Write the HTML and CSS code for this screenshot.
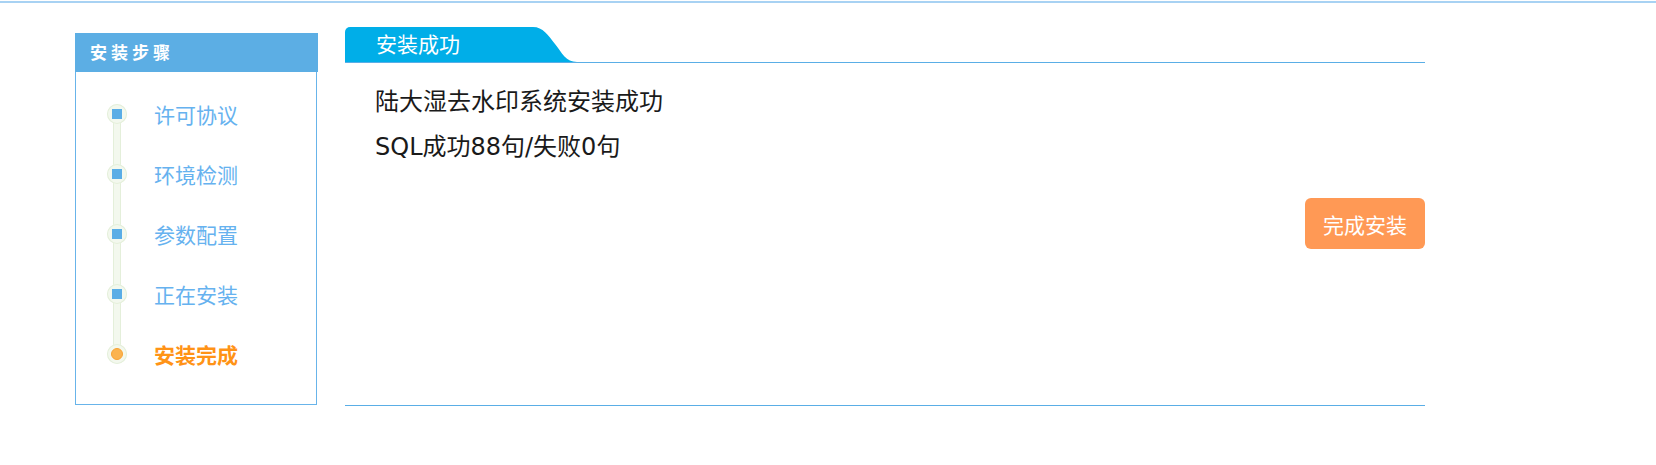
FILE: index.html
```html
<!DOCTYPE html>
<html lang="zh-CN">
<head>
<meta charset="UTF-8">
<meta name="viewport" content="width=device-width, initial-scale=1.0">
<title>安装成功</title>
<link rel="stylesheet" href="styles.css">
</head>
<body>

<div class="topline"></div>

<div class="wrap">
    <div class="side">
        <div class="side-title">安装步骤</div>
        <div class="side-body">
            <ul class="steps">
                <li class="done"><span class="dot"><i></i></span>许可协议</li>
                <li class="done"><span class="dot"><i></i></span>环境检测</li>
                <li class="done"><span class="dot"><i></i></span>参数配置</li>
                <li class="done"><span class="dot"><i></i></span>正在安装</li>
                <li class="current"><span class="dot"><i></i></span>安装完成</li>
            </ul>
        </div>
    </div>

    <div class="main">
        <div class="tabbar">
            <div class="tab">安装成功</div>
            <svg class="tab-curve" width="44" height="35" viewBox="0 0 44 35">
                <path d="M0 0 C10 0 15 8 22 17 C29 26 33 35 44 35 L0 35 Z" fill="#00aee8"/>
            </svg>
        </div>
        <div class="content">
            <p>陆大湿去水印系统安装成功</p>
            <p>SQL成功88句/失败0句</p>
            <div class="actions">
                <button class="btn">完成安装</button>
            </div>
        </div>
    </div>
</div>

</body>
</html>
```

FILE: styles.css
```css
body {
    margin: 0;
    padding: 0;
    background-color: #fff;
    font-family: "DejaVu Sans", "Noto Sans CJK SC", sans-serif;
    color: #1a1a1a;
}
.topline {
    height: 2px;
    margin-top: 1px;
    background-color: #a8d2f3;
}
.wrap {
    display: flex;
    align-items: flex-start;
    margin-left: 75px;
    gap: 27px;
}

/* side steps */
.side {
    width: 243px;
    margin-top: 30px;
}
.side-title {
    height: 39px;
    line-height: 37px;
    padding-left: 15px;
    background-color: #5caee4;
    color: #fff;
    font-family: "Noto Sans CJK SC", sans-serif;
    font-size: 17px;
    font-weight: bold;
    letter-spacing: 4px;
}
.side-body {
    width: 242px;
    height: 333px;
    box-sizing: border-box;
    border: 1px solid #68b4ea;
    border-top: none;
}
.steps {
    position: relative;
    list-style: none;
    margin: 0;
    padding: 12px 0 0 0;
}
.steps::before {
    content: "";
    position: absolute;
    left: 37px;
    top: 42px;
    height: 240px;
    width: 6px;
    background-color: #f3f8ee;
    border-left: 1px solid #e4efda;
    border-right: 1px solid #e4efda;
}
.steps li {
    position: relative;
    display: flex;
    align-items: center;
    height: 60px;
    padding-left: 31px;
    font-family: "Noto Sans CJK SC", sans-serif;
    font-size: 21px;
    color: #66b2ef;
}
.steps .dot {
    display: flex;
    align-items: center;
    justify-content: center;
    width: 20px;
    height: 20px;
    margin-right: 27px;
    border-radius: 50%;
    background-color: #f3f8ee;
    box-shadow: inset 0 0 0 1px #e4efda;
}
.steps .done i {
    display: block;
    width: 10px;
    height: 10px;
    background-color: #5aade6;
}
.steps .current {
    color: #ff9316;
    font-weight: bold;
}
.steps .current i {
    display: block;
    width: 10px;
    height: 10px;
    border-radius: 50%;
    background-color: #fbb34e;
    border: 1px solid #f8a233;
}

/* main panel */
.main {
    width: 1080px;
    margin-top: 24px;
}
.tabbar {
    display: flex;
    height: 35px;
    border-bottom: 1px solid #5aaee6;
}
.tab {
    width: 157px;
    padding-left: 31px;
    background-color: #00aee8;
    border-top-left-radius: 5px;
    color: #fff;
    font-family: "Noto Sans CJK SC", sans-serif;
    font-size: 21px;
    line-height: 33px;
}
.tab-curve {
    display: block;
}
.content {
    height: 343px;
    box-sizing: border-box;
    padding: 17px 0 0 30px;
    border-bottom: 1px solid #5aaee6;
}
.content p {
    margin: 0;
    font-size: 24px;
    line-height: 45px;
}
.actions {
    display: flex;
    justify-content: flex-end;
    margin-top: 28px;
}
.btn {
    width: 120px;
    height: 51px;
    border: none;
    border-radius: 6px;
    background-color: #ff9955;
    color: #fff;
    font-family: "Noto Sans CJK SC", sans-serif;
    font-size: 21px;
    cursor: pointer;
}
```
